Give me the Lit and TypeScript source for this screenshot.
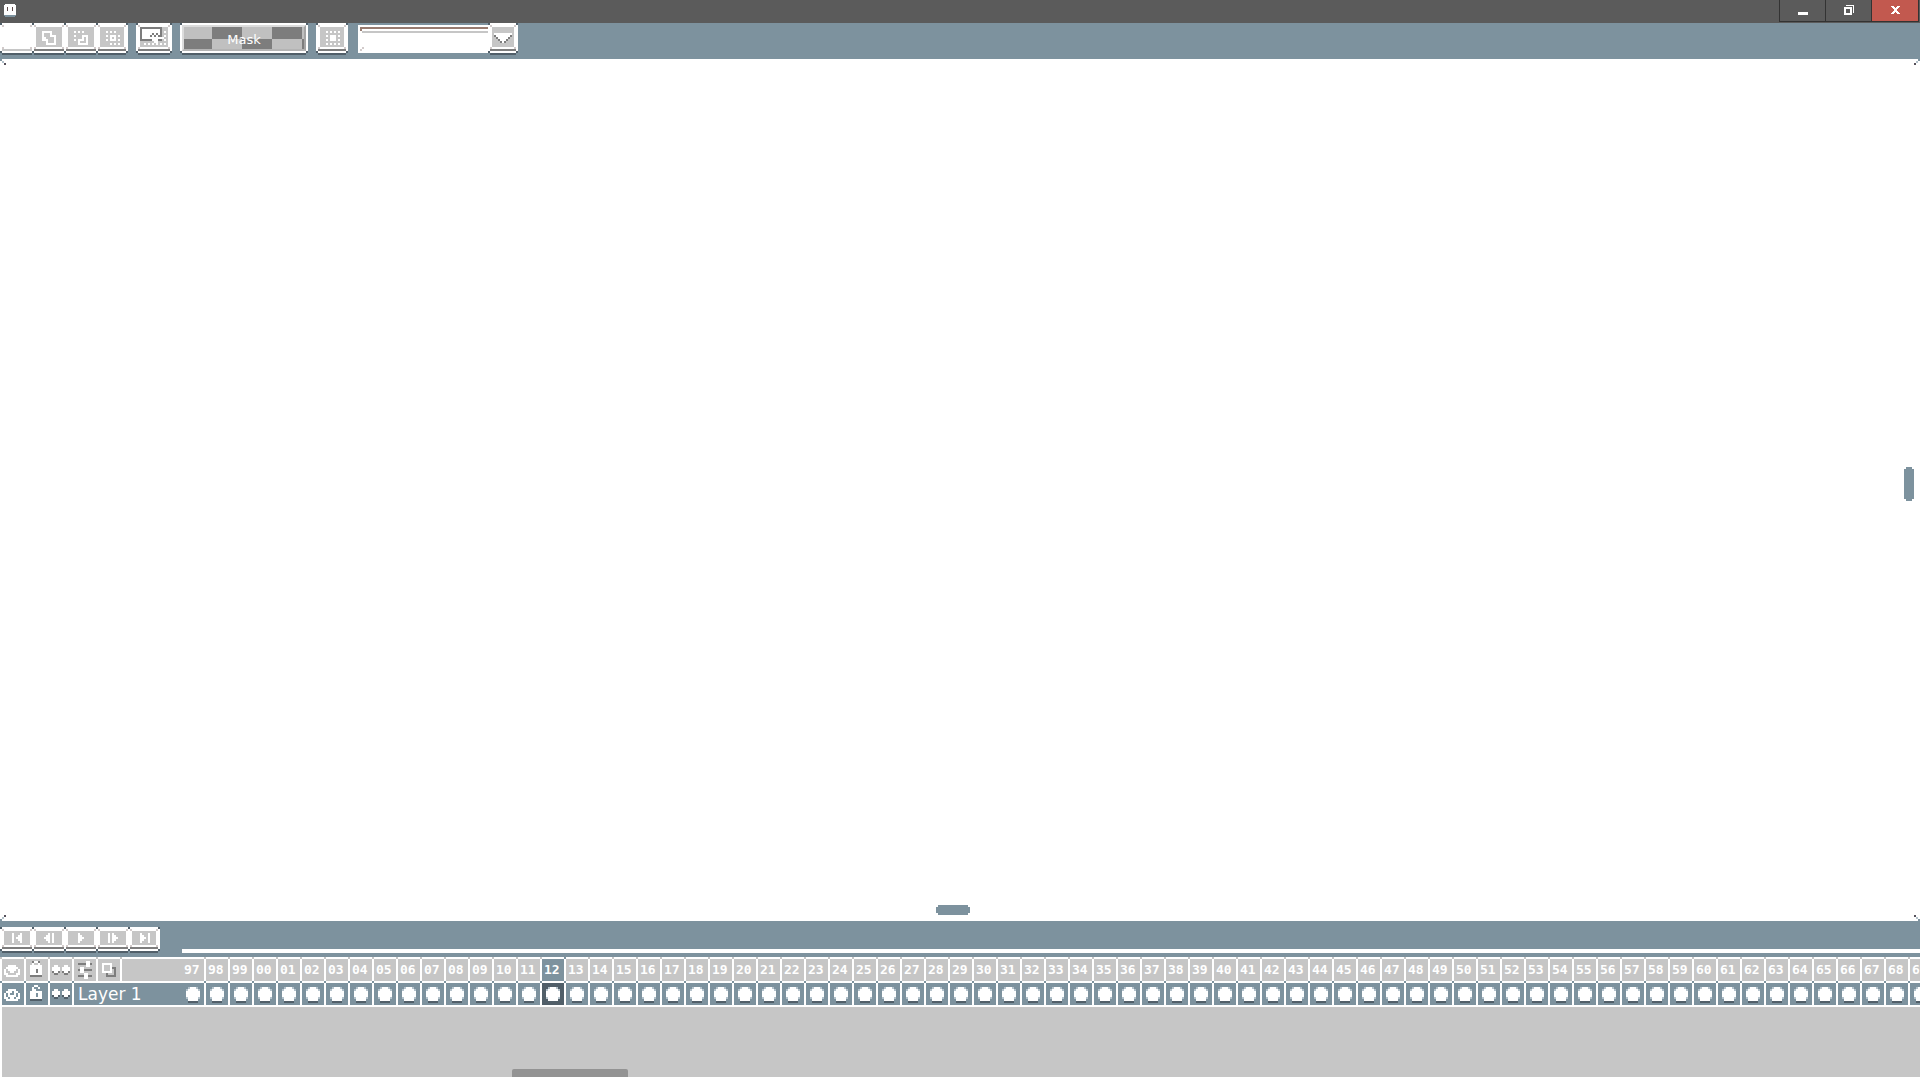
import { LitElement, html, svg, css } from "lit";
import { customElement } from "lit/decorators.js";

const COLORS: Record<string, string> = {
  W: "#ffffff",
  D: "#7d7d7d",
  N: "#515f69",
  K: "#55505a",
  B: "#7d929e",
  P: "#b4c2cb",
};

/** Draws a pixel icon: each character is one 2px block, "." stays empty. */
const pixels = (rows: string[], unit = 2) => {
  const w = Math.max(...rows.map((r) => r.length));
  const blocks: unknown[] = [];
  rows.forEach((row, y) => {
    let x = 0;
    while (x < row.length) {
      const c = row[x];
      let n = 1;
      while (row[x + n] === c) n++;
      if (c !== ".")
        blocks.push(svg`<rect x=${x} y=${y} width=${n} height="1" fill=${COLORS[c]}></rect>`);
      x += n;
    }
  });
  return html`<svg class="px" width=${w * unit} height=${rows.length * unit}
    viewBox="0 0 ${w} ${rows.length}" shape-rendering="crispEdges" aria-hidden="true">${blocks}</svg>`;
};

const ADD = ["", "", "...WWWWW", "...W...W", "...W...WWW", "...WW....W", "...WWW...W", ".....W...W", ".....WWWWW"];
const SUBTRACT = ["", "", "...W.W.W", "", "...W...WWW", ".......W.W", "...W.WWW.W", ".....W...W", ".....WWWWW"];
const INTERSECT = ["", "", "...W.W.W", "", "...W.WWW.W", ".....W.W", "...W.WWW.W", "", ".....W.W.W"];
const TRANSFORM = [
  "DDDDDDDDDDD",
  "DWWWWWWWWWD",
  "DWWWWWWWWWD.W",
  "DWWWWWDWDWD",
  "DWWWWDWDWDD.W",
  "DWWWWWWWWWWW",
  "DDDDDDWWWDD.W",
  ".......WW",
  "..W.W.W.W.W.W",
];
const MASKED = ["", "", "...W.W.W.W", "", "...W.WWW.W", ".....WWW", "...W.WWW.W", "", "...W.W.W.W"];
const ARROW = ["", "", "", ".WWWWWWWWW", ".DWWWWWWWD", "..DWWWWWD", "...DWWWD", "....DWD"];

const PLAYBACK: [string, string[]][] = [
  ["Go to first frame", ["", "....W...W", "....W..WW", "....W.WWW", "....W..WW", "....W...W"]],
  ["Previous frame", ["", "......W.W", ".....WW.W", "....WWW.W", ".....WW.W", "......W.W"]],
  ["Play", ["", ".....W", ".....WW", ".....WWW", ".....WW", ".....W"]],
  ["Next frame", ["", "....W.W", "....W.WW", "....W.WWW", "....W.WW", "....W.W"]],
  ["Go to last frame", ["", "....W...W", "....WW..W", "....WWW.W", "....WW..W", "....W...W"]],
];

const DOTS = ["", "", "", "..WW...WW", ".WWWW.WWWW", ".WWWW.WWWW", ".NWWN.NWWN", "..NN...NN"];
const HEADER_ICONS: [string, string[]][] = [
  ["Show all layers", ["", "", "", "...WWWW", "..WWWWWW", ".W.WWWW.W", ".W..WW..W", ".WW....WW", "..WWWWWW"]],
  ["Lock all layers", ["", "...DWWD", "...W..W", "..WWWWWW", "..WWWWWW", "..WWWDWW", "..WWWDWW", "..WWWWWW", "..DDDDDD"]],
  ["Link all cels", DOTS.map((r) => r.replace(/N/g, "D"))],
  ["Timeline settings", [
    "", "......WW", "..DDDDWWD", "......WW", "...WW", "..DWWDDDD", "...WW", ".....WW", "..DDDWWDD", ".....WW",
  ]],
  ["Onion skin", ["", "", "..WWWWW", "..W...W", "..W...WDD", "..W...W.D", "..WWWWW.D", "....D...D", "....DDDDD"]],
];
const LAYER_ICONS: [string, string[]][] = [
  ["Layer visible", ["", "", "", "...WWWW", "..WWWBWW", ".W.WBBW.W", ".W.WWWW.W", ".WW.WW.WW", "..WWWWWW"]],
  ["Layer unlocked", ["", "....WW", "...W..W", "...WW", "..WWWWWW", "..WWWBWW", "..WWWBWW", "..WWWWWW", "..NNNNNN"]],
  ["Cels linked", DOTS],
];
const CEL = [
  "",
  "",
  "...PWWWP",
  "..PWWWWWP",
  "..WWWWWWW",
  "..WWWWWWW",
  "..WWWWWWW",
  "..PWWWWWP",
  "...WWWWW",
  "...NNNNN",
];

const CURRENT = 15;
const FRAMES = Array.from({ length: 73 }, (_, i) => String((97 + i) % 100).padStart(2, "0"));

@customElement("app-root")
export class AppRoot extends LitElement {
  static styles = css`
    :host {
      --blue: #7d929e;
      --slate: #515f69;
      --gray: #c6c6c6;
      display: flex;
      flex-direction: column;
      height: 100vh;
      overflow: hidden;
      background: #fff;
      color: #fff;
      font-family: "DejaVu Sans", sans-serif;
    }
    * { box-sizing: border-box; }
    button {
      margin: 0;
      padding: 0;
      border: 0;
      color: inherit;
      font: inherit;
      background: none;
    }
    svg { display: block; flex: none; }

    .titlebar {
      display: flex;
      justify-content: space-between;
      align-items: flex-start;
      height: 23px;
      padding-right: 1px;
      background: #5b5b5b;
    }
    .logo { padding: 4px; }
    .window { display: flex; border-left: 1px solid #333; }
    .window button {
      display: grid;
      place-items: center;
      width: 46px;
      height: 22px;
      padding-bottom: 1px;
      border-right: 1px solid #333;
      border-bottom: 1px solid #333;
    }
    .window .close { width: 47px; background: #c2594f; }

    .toolbar {
      display: flex;
      align-items: flex-start;
      height: 36px;
      background: var(--blue);
    }
    .gap { margin-left: 8px; }
    .group { display: flex; }

    .key {
      --edge: #7d7d7d;
      display: block;
      flex: none;
      width: 34px;
      height: 32px;
      margin-right: -2px;
      padding: 4px 4px 8px;
      background:
        linear-gradient(var(--slate) 0 0) 0 0 / 2px 2px,
        linear-gradient(var(--slate) 0 0) 100% 0 / 2px 2px,
        linear-gradient(var(--slate) 0 0) 0 calc(100% - 2px) / 2px 2px,
        linear-gradient(var(--slate) 0 0) 100% calc(100% - 2px) / 2px 2px,
        linear-gradient(var(--slate) 0 0) 50% 100% / calc(100% - 4px) 2px,
        linear-gradient(var(--blue) 0 0) 0 100% / 100% 2px,
        linear-gradient(#d2cbcb 0 0) 2px 2px / 2px 2px,
        linear-gradient(#d2cbcb 0 0) calc(100% - 2px) 2px / 2px 2px,
        linear-gradient(#d2cbcb 0 0) 2px calc(100% - 6px) / 2px 2px,
        linear-gradient(#d2cbcb 0 0) calc(100% - 2px) calc(100% - 6px) / 2px 2px,
        linear-gradient(var(--edge) 0 0) 50% calc(100% - 4px) / calc(100% - 4px) 2px,
        #fff;
      background-repeat: no-repeat;
    }
    .key .face {
      display: block;
      height: 100%;
      overflow: hidden;
      background: var(--gray);
    }
    .key:last-child, .key.single { width: 32px; margin-right: 0; }
    .key.single.wide { width: 36px; }
    .key.single.drop { width: 30px; }
    .key.on { --edge: #c6c6c6; }
    .key.on .face { background: #fff; }

    .mask {
      width: 128px;
      height: 32px;
      padding: 2px 2px 4px;
      background:
        linear-gradient(var(--slate) 0 0) 0 0 / 2px 2px,
        linear-gradient(var(--slate) 0 0) 100% 0 / 2px 2px,
        linear-gradient(var(--slate) 0 0) 0 calc(100% - 2px) / 2px 2px,
        linear-gradient(var(--slate) 0 0) 100% calc(100% - 2px) / 2px 2px,
        linear-gradient(var(--slate) 0 0) 50% 100% / calc(100% - 4px) 2px,
        linear-gradient(var(--blue) 0 0) 0 100% / 100% 2px,
        #fff;
      background-repeat: no-repeat;
    }
    .mask .face {
      display: block;
      height: 26px;
      padding-top: 2px;
      border: 2px solid #dcdcdc;
      border-right-color: #a5a5a5;
      border-bottom-color: #b4b4b4;
      font-size: 13px;
      line-height: 22px;
      text-align: center;
      background: conic-gradient(#7d7d7d 25%, #c0c0c0 0 50%, #7d7d7d 0 75%, #c0c0c0 0) -2px 0 / 60px 24px;
    }

    .combo { display: flex; margin-left: 10px; }
    .combo input {
      width: 130px;
      height: 28px;
      margin: 2px 0;
      padding: 0 6px;
      border: 0;
      outline: 0;
      border-radius: 0;
      font: inherit;
      font-size: 13px;
      color: #7d7d7d;
      background:
        linear-gradient(#977b70 0 0) 2px 2px / 100% 2px,
        linear-gradient(#977b70 0 0) 2px 4px / 2px 2px,
        linear-gradient(var(--gray) 0 0) 4px 6px / 100% 2px,
        linear-gradient(#d2cbcb 0 0) 4px 22px / 2px 2px,
        linear-gradient(#d2cbcb 0 0) 2px 24px / 2px 2px,
        #fff;
      background-repeat: no-repeat;
    }

    .editor {
      position: relative;
      display: flex;
      flex-direction: column;
      flex: 1;
      min-height: 0;
      padding: 4px 6px 6px 2px;
    }
    .vtrack {
      display: grid;
      flex: 1;
      justify-content: end;
      align-content: center;
    }
    .htrack {
      display: grid;
      justify-content: center;
      padding-right: 10px;
    }
    .thumb {
      background:
        linear-gradient(var(--blue) 0 0) 50% 50% / calc(100% - 4px) 100% no-repeat,
        linear-gradient(var(--blue) 0 0) 50% 50% / 100% calc(100% - 4px) no-repeat;
    }
    .vtrack .thumb { width: 10px; height: 34px; }
    .htrack .thumb { width: 34px; height: 10px; }
    .corner { position: absolute; }
    .tl { top: 0; left: 0; }
    .tr { top: 0; right: 0; transform: scaleX(-1); }
    .bl { bottom: 0; left: 0; transform: scaleY(-1); }
    .br { bottom: 0; right: 0; transform: scale(-1); }

    .playbar {
      display: flex;
      height: 36px;
      padding-top: 6px;
      background: var(--blue);
    }
    .playbar .key { height: 26px; }
    .scroll {
      flex: 1;
      height: 4px;
      margin: 22px 0 0 22px;
      background: #fff;
    }

    .row {
      --cell: var(--gray);
      --dot: var(--gray);
      display: flex;
      height: 24px;
      overflow: hidden;
    }
    .row.layer { --cell: var(--blue); --dot: var(--blue); }
    .lead, .cell {
      flex: none;
      height: 24px;
      background:
        linear-gradient(var(--dot) 0 0) 100% 0 / 2px 2px,
        linear-gradient(#fff 0 0) 0 0 / 100% 2px,
        linear-gradient(#fff 0 0) 100% 0 / 2px 100%,
        var(--cell);
      background-repeat: no-repeat;
    }
    .lead { width: 2px; }
    .cell {
      display: flex;
      align-items: flex-start;
      width: 24px;
      padding-top: 2px;
      line-height: 22px;
    }
    .plain {
      flex: none;
      height: 24px;
      border-top: 2px solid #fff;
      background: var(--cell);
      line-height: 22px;
      text-align: left;
    }
    .filler { width: 60px; }
    .name { width: 108px; padding-left: 4px; font-size: 17px; }
    .number {
      padding-left: 2px;
      font-family: "DejaVu Sans Mono", monospace;
      font-size: 13px;
      font-weight: 700;
    }
    .header .current { --cell: var(--blue); --dot: var(--blue); }
    .layer .current { --cell: var(--slate); }

    .empty {
      display: flex;
      align-items: flex-end;
      height: 75px;
      border: 2px solid #fff;
      border-width: 2px 0 3px 2px;
      background: var(--gray);
    }
    .empty .bar {
      width: 116px;
      height: 8px;
      margin-left: 510px;
      background: #939393;
      border-radius: 2px 2px 0 0;
    }
  `;

  private key(label: string, icon: string[], extra = "") {
    return html`<button class="key ${extra}" aria-label=${label}><span class="face">${pixels(icon)}</span></button>`;
  }

  private cells(icons: [string, string[]][]) {
    return icons.map(([label, icon]) => html`<button class="cell" aria-label=${label}>${pixels(icon)}</button>`);
  }

  render() {
    const corner = ["B", ".P", "..K"];
    return html`
      <header class="titlebar">
        <svg class="logo" width="20" height="21" viewBox="0 0 12 13" shape-rendering="crispEdges" aria-hidden="true">
          <path fill="#fff" d="M1 0h10v1h1v10H0V1h1z"></path>
          <path fill="#7d929e" d="M0 11h12v1h-1v1H1v-1H0z"></path>
          <path fill="#5f4b4b" d="M3 3h1v4H3zM8 3h1v4H8z"></path>
        </svg>
        <div class="window">
          <button aria-label="Minimize">
            <svg width="10" height="11" viewBox="0 0 10 11"><path fill="#fff" d="M0 7h10v3H0z"></path></svg>
          </button>
          <button aria-label="Restore">
            <svg width="10" height="10" viewBox="0 0 10 10" shape-rendering="crispEdges">
              <path fill="#fff" fill-rule="evenodd" d="M0 2h8v8H0zM2 4v4h4V4zM2 0h8v8H9V1H2z"></path>
            </svg>
          </button>
          <button class="close" aria-label="Close">
            <svg width="9" height="8" viewBox="0 0 9 8" shape-rendering="crispEdges">
              <path fill="#fff" d="M0 0h3v1h1v1h1V1h1V0h3v1H8v1H7v1H6v2h1v1h1v1h1v1H6V7H5V6H4v1H3v1H0V7h1V6h1V5h1V3H2V2H1V1H0z"></path>
            </svg>
          </button>
        </div>
      </header>

      <nav class="toolbar">
        <div class="group">
          ${this.key("Replace selection", [""], "on")}
          ${this.key("Add to selection", ADD)}
          ${this.key("Subtract from selection", SUBTRACT)}
          ${this.key("Intersect selection", INTERSECT)}
        </div>
        <div class="gap">${this.key("Transform selection", TRANSFORM, "single wide")}</div>
        <button class="mask gap"><span class="face">Mask</span></button>
        <div class="gap">${this.key("Transparent color", MASKED, "single")}</div>
        <div class="combo">
          <input type="text" aria-label="Rotation algorithm" />
          ${this.key("Open list", ARROW, "single drop")}
        </div>
      </nav>

      <main class="editor">
        <div class="vtrack"><div class="thumb"></div></div>
        <div class="htrack"><div class="thumb"></div></div>
        <span class="corner tl">${pixels(corner)}</span>
        <span class="corner tr">${pixels(corner)}</span>
        <span class="corner bl">${pixels(corner)}</span>
        <span class="corner br">${pixels(corner)}</span>
      </main>

      <section class="timeline">
        <div class="playbar">
          <div class="group">${PLAYBACK.map(([label, icon]) => this.key(label, icon))}</div>
          <div class="scroll"></div>
        </div>
        <div class="row header">
          <span class="lead"></span>
          ${this.cells(HEADER_ICONS)}
          <span class="plain filler"></span>
          ${FRAMES.map((n, i) => html`<button class="cell number ${i === CURRENT ? "current" : ""}">${n}</button>`)}
        </div>
        <div class="row layer">
          <span class="lead"></span>
          ${this.cells(LAYER_ICONS)}
          <button class="plain name">Layer 1</button>
          ${FRAMES.map((n, i) => html`<button class="cell ${i === CURRENT ? "current" : ""}" aria-label="Cel ${n}">${pixels(CEL)}</button>`)}
        </div>
        <div class="empty"><div class="bar"></div></div>
      </section>
    `;
  }
}
